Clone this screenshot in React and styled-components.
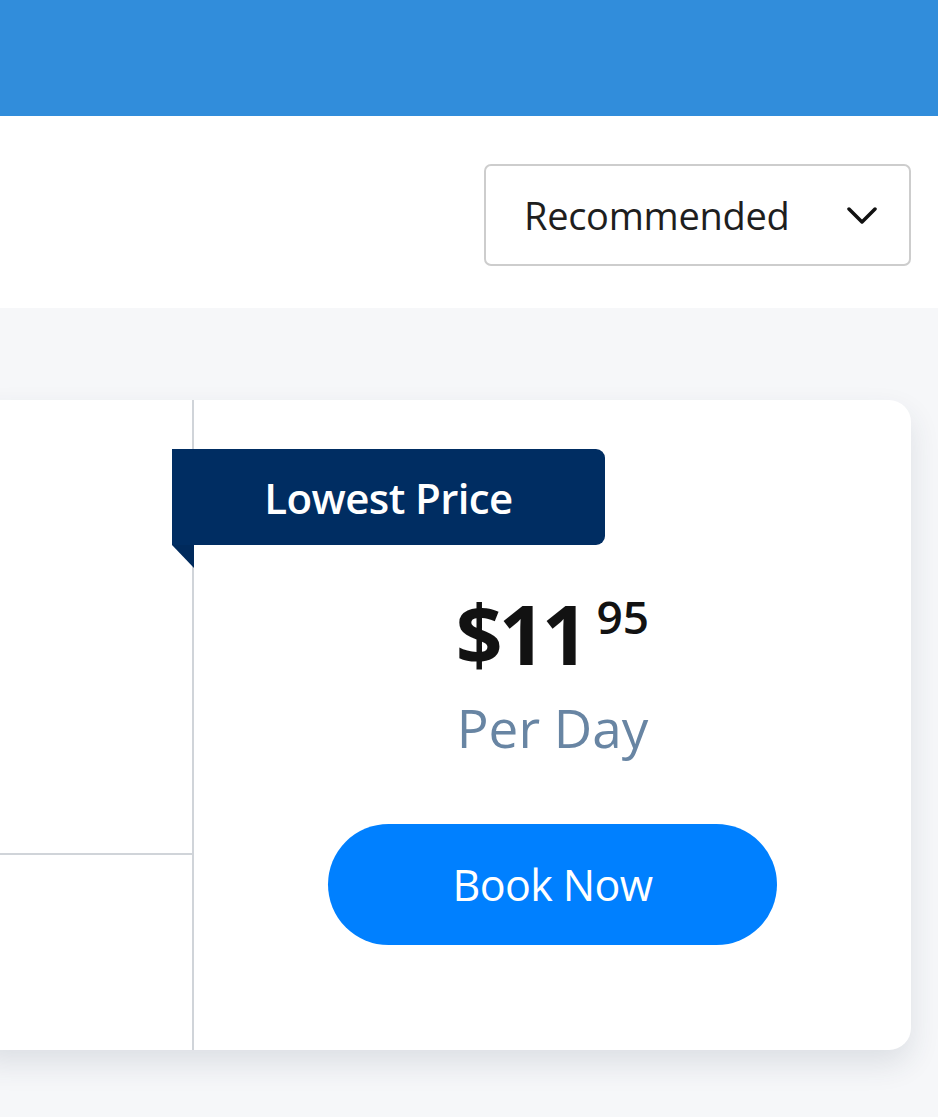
import React from "react";
import styled, { createGlobalStyle } from "styled-components";

const GlobalStyle = createGlobalStyle`
  * { box-sizing: border-box; }
  body {
    margin: 0;
    font-family: "Open Sans", "Noto Sans", sans-serif;
    background: #f6f7f9;
    overflow: hidden;
  }
`;

const Page = styled.div`
  width: 938px;
  height: 1117px;
  display: flex;
  flex-direction: column;
  background: #f6f7f9;
`;

const Header = styled.header`
  height: 116px;
  background: #318ddb;
`;

const Toolbar = styled.div`
  height: 192px;
  background: #ffffff;
  display: flex;
  justify-content: flex-end;
  align-items: flex-start;
  padding: 48px 27px 0 0;
`;

const SortSelect = styled.button`
  width: 427px;
  height: 102px;
  border: 2px solid #cdcdcd;
  border-radius: 7px;
  background: #fff;
  display: flex;
  align-items: center;
  justify-content: space-between;
  padding: 0 32px 0 38px;
  font-family: inherit;
  font-size: 38px;
  font-weight: 400;
  color: #1e1e1e;
  letter-spacing: -0.3px;
  cursor: pointer;
`;

const Results = styled.main`
  flex: 1;
  padding: 92px 27px 0 0;
  display: flex;
`;

const Card = styled.article`
  margin-left: -20px;
  flex: 1;
  height: 650px;
  display: flex;
  background: #fff;
  border-radius: 0 22px 22px 0;
  box-shadow: 0 14px 30px rgba(40, 60, 85, 0.12);
`;

const InfoColumn = styled.div`
  width: 212px;
  display: flex;
  flex-direction: column;
`;

const InfoTop = styled.div`
  height: 455px;
  border-bottom: 2px solid #d0d4d9;
`;

const PriceColumn = styled.div`
  position: relative;
  flex: 1;
  border-left: 2px solid #d0d4d9;
  display: flex;
  flex-direction: column;
  align-items: center;
  padding-top: 192px;
`;

const Ribbon = styled.div`
  position: absolute;
  top: 49px;
  left: -22px;
  width: 433px;
  height: 96px;
  background: #002d62;
  border-radius: 0 9px 9px 0;
  color: #fff;
  font-size: 42px;
  font-weight: 600;
  display: flex;
  align-items: center;
  justify-content: center;
  letter-spacing: -0.6px;

  &::after {
    content: "";
    position: absolute;
    left: 0;
    top: 96px;
    border-top: 23px solid #002a5c;
    border-left: 22px solid transparent;
  }
`;

const Price = styled.div`
  display: flex;
  align-items: flex-start;
  color: #121212;
  font-weight: 700;
  line-height: 1;
`;

const Dollars = styled.span`
  font-size: 82px;
  letter-spacing: -4px;
`;

const Cents = styled.span`
  font-size: 46px;
  margin-top: 1px;
  margin-left: 12px;
  font-weight: 600;
`;

const Unit = styled.div`
  margin-top: 27px;
  font-size: 53px;
  line-height: 1;
  color: #6885a3;
`;

const BookButton = styled.button`
  margin-top: 70px;
  width: 449px;
  height: 121px;
  border: none;
  border-radius: 61px;
  background: #0080ff;
  color: #fff;
  font-family: inherit;
  font-size: 43px;
  font-weight: 500;
  letter-spacing: -0.6px;
  cursor: pointer;
`;

const Chevron = () => (
  <svg width="30" height="19" viewBox="0 0 30 19" fill="none">
    <path d="M2 3 L15 16 L28 3" stroke="#111" strokeWidth="3.5" strokeLinecap="round" strokeLinejoin="round" />
  </svg>
);

export default function App() {
  return (
    <Page>
      <GlobalStyle />
      <Header />
      <Toolbar>
        <SortSelect>
          Recommended
          <Chevron />
        </SortSelect>
      </Toolbar>
      <Results>
        <Card>
          <InfoColumn>
            <InfoTop />
          </InfoColumn>
          <PriceColumn>
            <Ribbon>Lowest Price</Ribbon>
            <Price>
              <Dollars>$11</Dollars>
              <Cents>95</Cents>
            </Price>
            <Unit>Per Day</Unit>
            <BookButton>Book Now</BookButton>
          </PriceColumn>
        </Card>
      </Results>
    </Page>
  );
}
